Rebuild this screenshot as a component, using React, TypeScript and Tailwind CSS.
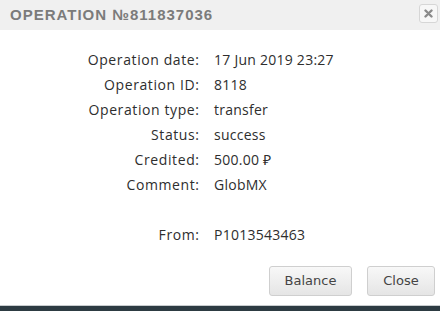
import React from "react";

const rows: [string, string][] = [
  ["Operation date:", "17 Jun 2019 23:27"],
  ["Operation ID:", "8118"],
  ["Operation type:", "transfer"],
  ["Status:", "success"],
  ["Credited:", "500.00 ₽"],
  ["Comment:", "GlobMX"],
  ["", ""],
  ["From:", "P1013543463"],
];

export default function App() {
  return (
    <div className="w-[440px] h-[311px] bg-white flex flex-col overflow-hidden">
      <div className="h-[30px] bg-[#f0f0f0] flex items-center justify-between pl-[10px] pr-[2px] shrink-0">
        <span
          className="text-[15px] text-[#7b7b7b] tracking-[1px] font-bold"
          style={{ fontFamily: "'Liberation Sans', Arial, sans-serif" }}
        >
          OPERATION №811837036
        </span>
        <button className="w-[19px] h-[19px] mb-[4px] rounded-[3px] border border-[#d6d6d6] bg-[#f7f7f7] flex items-center justify-center">
          <svg width="9" height="9" viewBox="0 0 9 9">
            <path d="M1.5 1.5 L7.5 7.5 M7.5 1.5 L1.5 7.5" stroke="#8a8a8a" strokeWidth="2.4" strokeLinecap="round" />
          </svg>
        </button>
      </div>
      <div
        className="grid grid-cols-[199px_1fr] gap-x-[15px] mt-[17px] text-[14px] text-[#2e2e2e] font-medium"
        style={{ fontFamily: "'Open Sans', sans-serif" }}
      >
        {rows.map(([l, v], i) => (
          <React.Fragment key={i}>
            <div className="text-right h-[25px] leading-[25px] tracking-[0.6px] -mr-[0.6px]">{l}</div>
            <div className="h-[25px] leading-[25px] tracking-[0.25px]">{v}</div>
          </React.Fragment>
        ))}
      </div>
      <div className="flex-1" />
      <div className="flex justify-end gap-[15px] pr-[5px] pb-[9px]">
        {["Balance", "Close"].map((b) => (
          <button
            key={b}
            className={`h-[30px] ${b === "Balance" ? "w-[83px]" : "w-[68px]"} rounded-[3px] border border-[#cfcfcf] bg-gradient-to-b from-[#f8f8f8] to-[#e5e5e5] text-[13px] text-[#444]`}
            style={{ fontFamily: "'DejaVu Sans', Verdana, sans-serif" }}
          >
            {b}
          </button>
        ))}
      </div>
      <div className="h-px bg-[#c9cdcf] shrink-0" />
      <div className="h-[5px] bg-[#2d3b42] shrink-0" />
    </div>
  );
}
